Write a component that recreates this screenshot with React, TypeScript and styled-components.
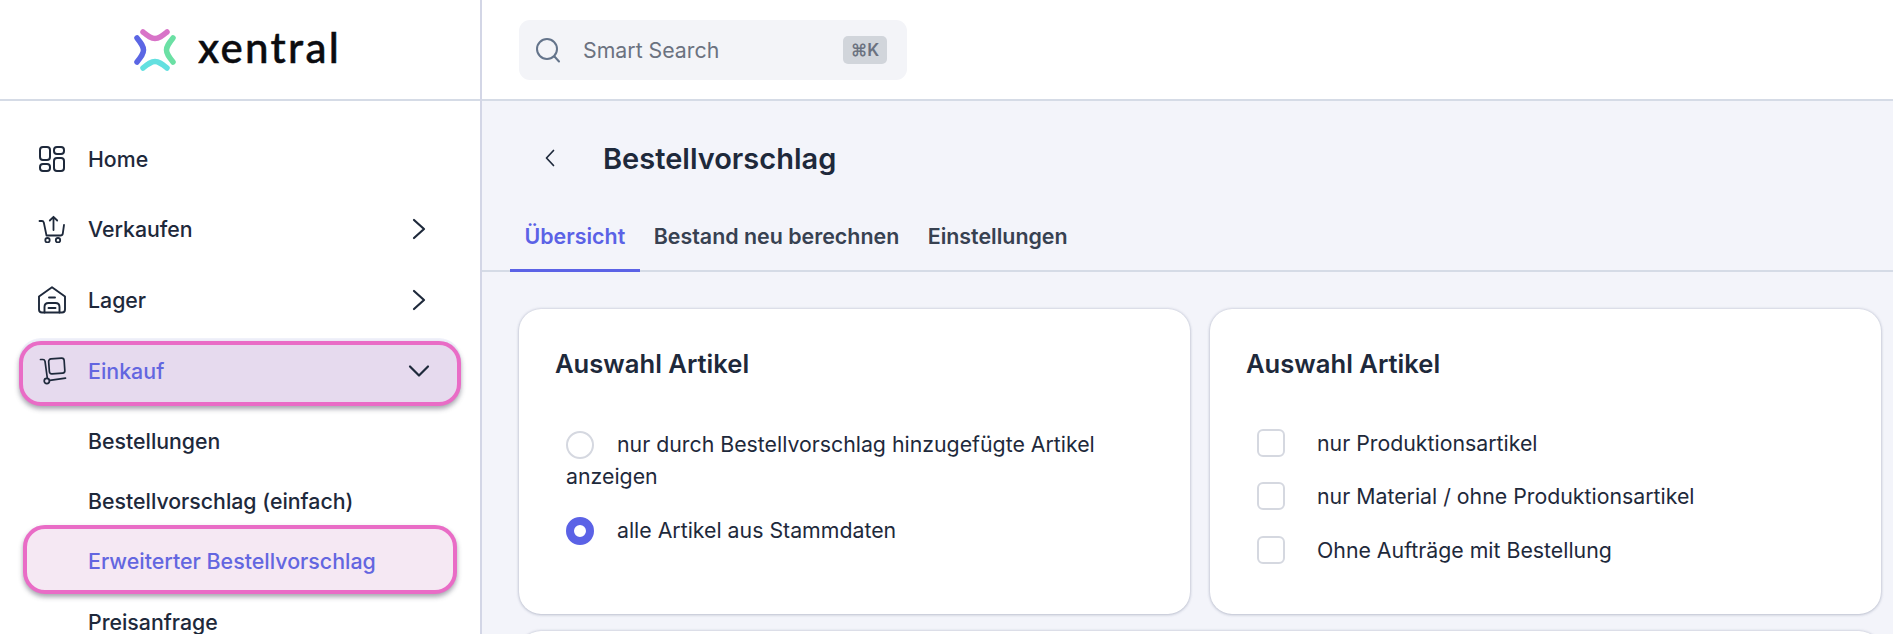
import React from "react";
import styled, { createGlobalStyle } from "styled-components";

const Global = createGlobalStyle`
  html, body { margin: 0; padding: 0; height: 634px; overflow: hidden; background: #fff; }
  body { font-family: Inter, "Liberation Sans", sans-serif; color: #1e293b; }
  * { box-sizing: border-box; }
`;

const Page = styled.div`
  display: grid;
  grid-template-columns: 482px 1fr;
  height: 634px;
  overflow: hidden;
`;

const Sidebar = styled.aside`
  background: #fff;
  border-right: 2px solid #d3d6e6;
  height: 634px;
  overflow: hidden;
`;

const LogoBar = styled.div`
  height: 101px;
  border-bottom: 2px solid #d5dbe6;
  display: flex;
  align-items: center;
  padding: 0 0 0 133px;
  gap: 21px;
`;

const LogoText = styled.span`
  font-family: Lato, "Open Sans", sans-serif;
  font-size: 42px;
  font-weight: 500;
  letter-spacing: 2.3px;
  -webkit-text-stroke: 0.5px #0b0b0f;
  color: #0b0b0f;
  line-height: 1;
  margin-bottom: 6px;
`;

const Nav = styled.nav`
  display: flex;
  flex-direction: column;
  padding-top: 22px;
`;

const NavRow = styled.div<{ $h: number }>`
  position: relative;
  height: ${(p) => p.$h}px;
  flex: none;
  display: flex;
  align-items: center;
  font-size: 21.3px;
  font-weight: 500;
  padding-left: 88px;
  padding-right: 47px;
  color: #1e293b;
`;

const NavIcon = styled.span`
  position: absolute;
  left: 38px;
  width: 28px;
  height: 28px;
  display: flex;
  align-items: center;
  justify-content: center;
`;

const NavLabel = styled.span`
  flex: 1;
`;

const Chevron = styled.span`
  display: flex;
  width: 28px;
  justify-content: center;
  color: #1e293b;
`;

const Marked = styled.div<{ $bg: string; $inset: number; $h: number; $top: number; $lift: number; $halo?: boolean }>`
  position: relative;
  flex: none;
  display: flex;
  align-items: center;
  height: ${(p) => p.$h}px;
  margin: ${(p) => p.$top}px ${(p) => p.$inset}px 0 ${(p) => p.$inset}px;
  padding-left: ${(p) => 88 - p.$inset - 4}px;
  padding-right: ${(p) => 47 - p.$inset - 4}px;
  padding-bottom: ${(p) => (p.$lift > 0 ? p.$lift : 0)}px;
  padding-top: ${(p) => (p.$lift < 0 ? -p.$lift : 0)}px;
  background: ${(p) => p.$bg};
  border: 4px solid #e96cc6;
  border-radius: 22px;
  box-shadow: 0 3px 5px rgba(60, 60, 80, 0.45) ${(p) => (p.$halo ? ", 0 -3px 0 0 #f1f2fb" : "")};
  color: #6366e0;
  font-size: 21.4px;
  font-weight: 500;
`;

const MarkedIcon = styled.span`
  position: absolute;
  left: 16px;
  width: 28px;
  height: 28px;
  display: flex;
  align-items: center;
  justify-content: center;
  color: #1e293b;
`;

const Main = styled.main`
  background: #f3f4fa;
  height: 634px;
  overflow: hidden;
  display: flex;
  flex-direction: column;
`;

const TopBar = styled.header`
  height: 101px;
  flex: none;
  background: #fff;
  border-bottom: 2px solid #d5dbe6;
  padding: 20px 0 0 37px;
`;

const SearchBox = styled.div`
  width: 388px;
  height: 60px;
  background: #f3f4f8;
  border-radius: 11px;
  display: flex;
  align-items: center;
  padding: 0 20px 0 16px;
`;

const SearchText = styled.span`
  flex: 1;
  margin-left: 22px;
  font-size: 21.3px;
  color: #6b7280;
`;

const Kbd = styled.kbd`
  width: 44px;
  height: 28px;
  background: #d1d5db;
  border-radius: 5px;
  font-family: Inter, "DejaVu Sans", sans-serif;
  font-size: 17px;
  font-weight: 600;
  color: #6b7280;
  display: flex;
  align-items: center;
  justify-content: center;
`;

const TitleRow = styled.div`
  height: 56px;
  margin-top: 29px;
  flex: none;
  display: flex;
  align-items: center;
  padding-left: 63px;
`;

const Title = styled.h1`
  margin: 0 0 0 48px;
  font-size: 29px;
  font-weight: 600;
  color: #1e293b;
`;

const Tabs = styled.div`
  margin-top: 26px;
  height: 60px;
  flex: none;
  border-bottom: 2px solid #d5dbe6;
  display: flex;
  padding-left: 28px;
`;

const Tab = styled.div<{ $active?: boolean }>`
  height: 60px;
  padding: 0 14.5px 9px;
  margin-right: -0.5px;
  display: flex;
  align-items: center;
  font-size: 21.4px;
  font-weight: 600;
  color: ${(p) => (p.$active ? "#5b62e6" : "#374151")};
  border-bottom: 3px solid ${(p) => (p.$active ? "#5b62e6" : "transparent")};
`;

const Cards = styled.div`
  display: grid;
  grid-template-columns: 671px 671px;
  gap: 17px 20px;
  padding: 37px 0 0 37px;
`;

const Card = styled.section`
  height: 305px;
  background: #fff;
  border-radius: 22px;
  box-shadow: 0 0 3px rgba(100, 110, 140, 0.35), 0 1px 3px rgba(100, 110, 140, 0.25);
  padding: 37px 36px 0 36px;
`;

const NextCard = styled(Card)`
  grid-column: 1 / -1;
  height: 120px;
`;

const CardTitle = styled.h2`
  margin: 0 0 46px;
  font-size: 25.6px;
  line-height: 36px;
  font-weight: 600;
  color: #1e293b;
`;

const RadioLine = styled.div`
  margin: 0 0 0 11px;
  font-size: 21.3px;
  line-height: 32px;
  color: #1e293b;
  padding-bottom: 22px;
`;

const Radio = styled.span<{ $on?: boolean }>`
  display: inline-block;
  width: 28px;
  height: 28px;
  border-radius: 50%;
  vertical-align: -7px;
  margin-right: 23px;
  background: #fff;
  border: ${(p) => (p.$on ? "8px solid #5b62e6" : "2px solid #d5d8e0")};
`;

const CheckRow = styled.div`
  display: flex;
  align-items: center;
  height: 53.5px;
  margin-left: 11px;
  margin-top: -12px;
  margin-bottom: 12px;
  font-size: 21.3px;
  color: #1e293b;
`;

const Box = styled.span`
  width: 28px;
  height: 28px;
  border-radius: 6px;
  border: 2px solid #d5d8e0;
  margin-right: 32px;
  flex: none;
`;

const Stroke = styled.svg.attrs({
  fill: "none",
  stroke: "currentColor",
  strokeLinecap: "round",
  strokeLinejoin: "round",
})``;

const LogoMark = () => (
  <svg width="44" height="44" viewBox="0 0 44 44" fill="none" strokeWidth="5.5" strokeLinecap="round" strokeLinejoin="round">
    <path d="M10 4 C15 8 18 10.5 22 10.5 C26 10.5 29 8 34 4" stroke="#d873c8" />
    <path d="M4 10 C8 15 10.5 18 10.5 22 C10.5 26 8 29 4 34" stroke="#5b66e4" />
    <path d="M40 10 C36 15 33.5 18 33.5 22 C33.5 26 36 29 40 34" stroke="#6be0a4" />
    <path d="M10 40 C15 36 18 33.5 22 33.5 C26 33.5 29 36 34 40" stroke="#63e0e0" />
  </svg>
);

const HomeIcon = () => (
  <Stroke width="28" height="28" viewBox="0 0 28 28" strokeWidth="2">
    <rect x="2" y="2" width="10" height="13" rx="3" />
    <rect x="16" y="2" width="10" height="7" rx="3" />
    <rect x="2" y="19" width="10" height="7" rx="3" />
    <rect x="16" y="13" width="10" height="13" rx="3" />
  </Stroke>
);

const CartIcon = () => (
  <Stroke width="28" height="28" viewBox="0 0 28 28" strokeWidth="1.8">
    <path d="M1.5 6 H4 C5 6 5.5 6.5 5.8 7.5 L8.5 20.5 H22.5 C24 20.5 24.6 19.8 24.8 18.5 L26 10" />
    <path d="M15.5 15 V2 M11.8 5.5 L15.5 1.8 L19.2 5.5" />
    <circle cx="9.5" cy="25.2" r="2.2" />
    <circle cx="20" cy="25.2" r="2.2" />
  </Stroke>
);

const WarehouseIcon = () => (
  <Stroke width="28" height="28" viewBox="0 0 28 28" strokeWidth="1.9">
    <path d="M1 10.5 L14 1.2 L27 10.5 V23.5 C27 25.5 26 26.5 24 26.5 H4 C2 26.5 1 25.5 1 23.5 Z" />
    <path d="M11 11.5 H17" />
    <path d="M6.5 26.5 V21 C6.5 18.5 8 17 10.5 17 H17.5 C20 17 21.5 18.5 21.5 21 V26.5" />
    <path d="M10.5 22 H17.5" />
  </Stroke>
);

const TrolleyIcon = () => (
  <Stroke width="28" height="28" viewBox="0 0 28 28" strokeWidth="1.7">
    <path d="M1.5 2.5 H4 C5 2.5 5.7 3.2 6 4.2 L8.3 21" />
    <rect x="10" y="1.5" width="15.5" height="15" rx="2.5" transform="rotate(-4 18 9)" />
    <path d="M10.8 23.4 L26.5 21.2" />
    <circle cx="7.8" cy="24" r="2.6" />
  </Stroke>
);

const ChevronRight = () => (
  <Stroke width="14" height="22" viewBox="0 0 14 22" strokeWidth="2.2">
    <path d="M2 2 L12 11 L2 20" />
  </Stroke>
);

const ChevronDown = () => (
  <Stroke width="22" height="14" viewBox="0 0 22 14" strokeWidth="2.2">
    <path d="M2 2.5 L11 11.5 L20 2.5" />
  </Stroke>
);

const SearchIcon = () => (
  <svg width="26" height="26" viewBox="0 0 26 26" fill="none" stroke="#64748b" strokeWidth="2" strokeLinecap="round">
    <circle cx="12" cy="12" r="10" />
    <path d="M19.5 19.5 L24 24.5" />
  </svg>
);

const BackIcon = () => (
  <svg width="10" height="18" viewBox="0 0 10 18" fill="none" stroke="#1e293b" strokeWidth="1.7" strokeLinecap="round" strokeLinejoin="round">
    <path d="M8.5 1.5 L1.5 9 L8.5 16.5" />
  </svg>
);

export default function App() {
  return (
    <>
      <Global />
      <Page>
        <Sidebar>
          <LogoBar>
            <LogoMark />
            <LogoText>xentral</LogoText>
          </LogoBar>
          <Nav>
            <NavRow $h={72}>
              <NavIcon><HomeIcon /></NavIcon>
              <NavLabel>Home</NavLabel>
            </NavRow>
            <NavRow $h={68}>
              <NavIcon><CartIcon /></NavIcon>
              <NavLabel>Verkaufen</NavLabel>
              <Chevron><ChevronRight /></Chevron>
            </NavRow>
            <NavRow $h={74}>
              <NavIcon><WarehouseIcon /></NavIcon>
              <NavLabel>Lager</NavLabel>
              <Chevron><ChevronRight /></Chevron>
            </NavRow>
            <Marked $bg="#e6daee" $inset={19} $h={65} $top={4} $lift={6} $halo>
              <MarkedIcon><TrolleyIcon /></MarkedIcon>
              <NavLabel>Einkauf</NavLabel>
              <Chevron><ChevronDown /></Chevron>
            </Marked>
            <NavRow $h={70}><NavLabel>Bestellungen</NavLabel></NavRow>
            <NavRow $h={49}><NavLabel>Bestellvorschlag (einfach)</NavLabel></NavRow>
            <Marked $bg="#f5e8f3" $inset={23} $h={69} $top={0} $lift={-3}>
              <NavLabel>Erweiterter Bestellvorschlag</NavLabel>
            </Marked>
            <NavRow $h={56}><NavLabel>Preisanfrage</NavLabel></NavRow>
          </Nav>
        </Sidebar>
        <Main>
          <TopBar>
            <SearchBox>
              <SearchIcon />
              <SearchText>Smart Search</SearchText>
              <Kbd>⌘K</Kbd>
            </SearchBox>
          </TopBar>
          <TitleRow>
            <BackIcon />
            <Title>Bestellvorschlag</Title>
          </TitleRow>
          <Tabs>
            <Tab $active>Übersicht</Tab>
            <Tab>Bestand neu berechnen</Tab>
            <Tab>Einstellungen</Tab>
          </Tabs>
          <Cards>
            <Card>
              <CardTitle>Auswahl Artikel</CardTitle>
              <RadioLine><Radio />nur durch Bestellvorschlag hinzugefügte Artikel anzeigen</RadioLine>
              <RadioLine><Radio $on />alle Artikel aus Stammdaten</RadioLine>
            </Card>
            <Card>
              <CardTitle>Auswahl Artikel</CardTitle>
              <CheckRow><Box />nur Produktionsartikel</CheckRow>
              <CheckRow><Box />nur Material / ohne Produktionsartikel</CheckRow>
              <CheckRow><Box />Ohne Aufträge mit Bestellung</CheckRow>
            </Card>
            <NextCard />
          </Cards>
        </Main>
      </Page>
    </>
  );
}
